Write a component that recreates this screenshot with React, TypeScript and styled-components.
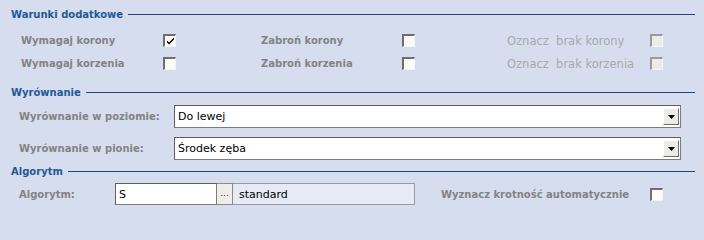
import styled, { createGlobalStyle } from "styled-components";

const GlobalStyle = createGlobalStyle`
  html, body {
    margin: 0;
    padding: 0;
    background: #d6ddef;
  }
  body {
    font-family: "DejaVu Sans", Verdana, sans-serif;
  }
`;

const Panel = styled.div`
  width: 704px;
  height: 218px;
  padding-top: 7px;
  box-sizing: border-box;
  background: #d6ddef;
  display: flex;
  flex-direction: column;
`;

const Header = styled.div<{ $top?: number }>`
  height: 14px;
  margin-top: ${(p) => p.$top ?? 0}px;
  padding-left: 11px;
  padding-right: 9px;
  display: flex;
  align-items: center;
  gap: 5px;
  font-size: 10px;
  font-weight: bold;
  color: #1f5a96;
  white-space: nowrap;
  &::after {
    content: "";
    flex: 1;
    height: 1px;
    background: #1f4a74;
  }
`;

const CheckGrid = styled.div<{ $top?: number }>`
  height: 23px;
  margin-top: ${(p) => p.$top ?? 0}px;
  padding-left: 21px;
  display: grid;
  grid-template-columns: 142px 98px 141px 105px 143px 13px;
  align-items: center;
`;

const Label = styled.span`
  font-size: 10px;
  font-weight: bold;
  color: #838383;
  white-space: nowrap;
`;

const DisabledLabel = styled.span`
  font-size: 11.5px;
  color: #a9a9a9;
  white-space: pre;
`;

const Check = styled.span<{ $disabled?: boolean }>`
  width: 13px;
  height: 13px;
  box-sizing: border-box;
  border-top: 2px solid ${(p) => (p.$disabled ? "#9a9a9a" : "#6e6e6e")};
  border-left: 2px solid ${(p) => (p.$disabled ? "#9a9a9a" : "#6e6e6e")};
  border-right: 1px solid #f4f4f4;
  border-bottom: 1px solid #f4f4f4;
  background: ${(p) => (p.$disabled ? "#ecece6" : "#fbfbf8")};
  display: flex;
  align-items: center;
  justify-content: center;
`;

const Field = styled.div<{ $top?: number }>`
  height: 23px;
  margin-top: ${(p) => p.$top ?? 0}px;
  padding-left: 19px;
  padding-right: 23px;
  display: grid;
  grid-template-columns: 155px 1fr;
  align-items: center;
`;

const Combo = styled.div`
  height: 23px;
  box-sizing: border-box;
  border: 1px solid #7c7c7c;
  border-top-color: #5f5f5f;
  border-left-color: #5f5f5f;
  background: #fff;
  display: flex;
  align-items: center;
  padding: 0 1px 0 3px;
`;

const ComboText = styled.span`
  flex: 1;
  font-size: 11px;
  color: #000;
`;

const DropButton = styled.span`
  width: 16px;
  height: 17px;
  box-sizing: border-box;
  background: #ecebe6;
  border: 1px solid #fff;
  border-right-color: #6d6d6d;
  border-bottom-color: #6d6d6d;
  display: flex;
  align-items: center;
  justify-content: center;
`;

const AlgoRow = styled.div`
  height: 22px;
  margin-top: 5px;
  padding-left: 19px;
  display: grid;
  grid-template-columns: 96px 102px 16px 182px 26px 209px 13px;
  align-items: center;
`;

const TextBox = styled.div`
  height: 22px;
  box-sizing: border-box;
  border: 1px solid #7c7c7c;
  border-top-color: #5f5f5f;
  border-left-color: #5f5f5f;
  background: #fff;
  padding-left: 3px;
  display: flex;
  align-items: center;
  font-size: 11px;
  color: #000;
`;

const DotsButton = styled.span`
  height: 22px;
  box-sizing: border-box;
  background: #eeede8;
  border: 1px solid #8a8a8a;
  border-left: none;
  display: flex;
  align-items: center;
  justify-content: center;
  font-size: 9px;
  color: #333;
  padding-bottom: 3px;
`;

const Description = styled.div`
  height: 22px;
  box-sizing: border-box;
  border: 1px solid #9a9a9a;
  border-left: none;
  background: #e6eaf6;
  padding-left: 6px;
  display: flex;
  align-items: center;
  font-size: 11px;
  color: #000;
`;

const Tick = () => (
  <svg width="9" height="8" viewBox="0 0 9 8">
    <path d="M1 3.5 L3 5.5 L8 0.5 L8 2.5 L3 7.5 L1 5.5 Z" fill="#000" />
  </svg>
);

const Arrow = () => (
  <svg width="7" height="4" viewBox="0 0 7 4">
    <path d="M0 0 H7 L3.5 4 Z" fill="#000" />
  </svg>
);

function App() {
  return (
    <>
      <GlobalStyle />
      <Panel>
        <Header>Warunki dodatkowe</Header>
        <CheckGrid $top={8}>
          <Label>Wymagaj korony</Label>
          <Check>
            <Tick />
          </Check>
          <Label>Zabroń korony</Label>
          <Check />
          <DisabledLabel>Oznacz  brak korony</DisabledLabel>
          <Check $disabled />
        </CheckGrid>
        <CheckGrid>
          <Label>Wymagaj korzenia</Label>
          <Check />
          <Label>Zabroń korzenia</Label>
          <Check />
          <DisabledLabel>Oznacz  brak korzenia</DisabledLabel>
          <Check $disabled />
        </CheckGrid>

        <Header $top={10}>Wyrównanie</Header>
        <Field $top={6}>
          <Label>Wyrównanie w poziomie:</Label>
          <Combo>
            <ComboText>Do lewej</ComboText>
            <DropButton>
              <Arrow />
            </DropButton>
          </Combo>
        </Field>
        <Field $top={9}>
          <Label>Wyrównanie w pionie:</Label>
          <Combo>
            <ComboText>Środek zęba</ComboText>
            <DropButton>
              <Arrow />
            </DropButton>
          </Combo>
        </Field>

        <Header $top={4}>Algorytm</Header>
        <AlgoRow>
          <Label>Algorytm:</Label>
          <TextBox>S</TextBox>
          <DotsButton>...</DotsButton>
          <Description>standard</Description>
          <span />
          <Label>Wyznacz krotność automatycznie</Label>
          <Check />
        </AlgoRow>
      </Panel>
    </>
  );
}

export default App;
